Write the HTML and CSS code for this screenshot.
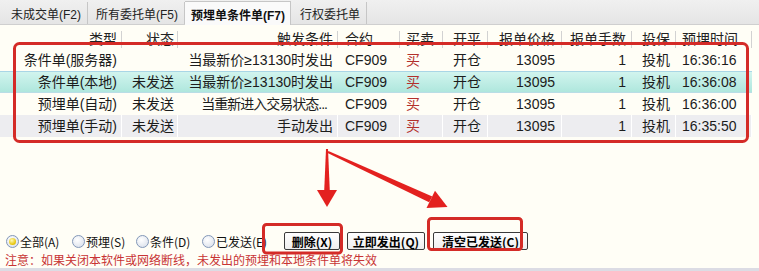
FILE: index.html
```html
<!DOCTYPE html>
<html lang="zh-CN">
<head>
<meta charset="utf-8">
<title>预埋单条件单</title>
<link rel="stylesheet" href="styles.css">
</head>
<body>
<div class="page">
  <div class="tabs">
    <div class="tab">未成交单(F2)</div>
    <div class="tab">所有委托单(F5)</div>
    <div class="tab active">预埋单条件单(F7)</div>
    <div class="tab last">行权委托单</div>
  </div>

  <div class="grid">
    <div class="row head">
      <div class="c c1">类型</div>
      <div class="c c2">状态</div>
      <div class="c c3">触发条件</div>
      <div class="c c4">合约</div>
      <div class="c c5">买卖</div>
      <div class="c c6">开平</div>
      <div class="c c7">报单价格</div>
      <div class="c c8">报单手数</div>
      <div class="c c9">投保</div>
      <div class="c c10">预埋时间</div>
    </div>
    <div class="row r">
      <div class="c c1">条件单(服务器)</div>
      <div class="c c2"></div>
      <div class="c c3">当最新价≥13130时发出</div>
      <div class="c c4">CF909</div>
      <div class="c c5 buy">买</div>
      <div class="c c6">开仓</div>
      <div class="c c7">13095</div>
      <div class="c c8">1</div>
      <div class="c c9">投机</div>
      <div class="c c10">16:36:16</div>
    </div>
    <div class="row r sel">
      <div class="c c1">条件单(本地)</div>
      <div class="c c2">未发送</div>
      <div class="c c3">当最新价≥13130时发出</div>
      <div class="c c4">CF909</div>
      <div class="c c5 buy">买</div>
      <div class="c c6">开仓</div>
      <div class="c c7">13095</div>
      <div class="c c8">1</div>
      <div class="c c9">投机</div>
      <div class="c c10">16:36:08</div>
    </div>
    <div class="row r">
      <div class="c c1">预埋单(自动)</div>
      <div class="c c2">未发送</div>
      <div class="c c3 trunc">当重新进入交易状态...</div>
      <div class="c c4">CF909</div>
      <div class="c c5 buy">买</div>
      <div class="c c6">开仓</div>
      <div class="c c7">13095</div>
      <div class="c c8">1</div>
      <div class="c c9">投机</div>
      <div class="c c10">16:36:00</div>
    </div>
    <div class="row r alt">
      <div class="c c1">预埋单(手动)</div>
      <div class="c c2">未发送</div>
      <div class="c c3">手动发出</div>
      <div class="c c4">CF909</div>
      <div class="c c5 buy">买</div>
      <div class="c c6">开仓</div>
      <div class="c c7">13095</div>
      <div class="c c8">1</div>
      <div class="c c9">投机</div>
      <div class="c c10">16:35:50</div>
    </div>
  </div>

  <div class="filler"></div>

  <div class="controls">
    <div class="opt w1"><span class="dot on"></span>全部(A)</div>
    <div class="opt w2"><span class="dot"></span>预埋(S)</div>
    <div class="opt w3"><span class="dot"></span>条件(D)</div>
    <div class="opt w4"><span class="dot"></span>已发送(E)</div>
    <div class="btn b1">删除(X)</div>
    <div class="btn b2">立即发出(Q)</div>
    <div class="btn b3">清空已发送(C)</div>
  </div>
  <div class="notice">注意：如果关闭本软件或网络断线，未发出的预埋和本地条件单将失效</div>
  <div class="bottombar"></div>

  <svg class="annot" width="759" height="271" viewBox="0 0 759 271">
    <rect x="14.5" y="43.5" width="733" height="98" rx="5" fill="none" stroke="#d42b27" stroke-width="3"/>
    <rect x="263.5" y="224.5" width="78" height="28.5" rx="3" fill="none" stroke="#d42b27" stroke-width="3"/>
    <rect x="428.5" y="218.5" width="93" height="31" rx="3" fill="none" stroke="#d42b27" stroke-width="3"/>
    <polygon points="326,149 328,149 329.8,191 324.2,191" fill="#e3211f"/>
    <polygon points="317,190 337,190 327,207" fill="#e3211f"/>
    <polygon points="327.6,152.9 328.4,151.1 432.3,196.5 429.1,202.3" fill="#e3211f"/>
    <polygon points="426.5,208 435,190.8 447.5,207" fill="#e3211f"/>
  </svg>
</div>
</body>
</html>
```

FILE: styles.css
```css
body {
  margin: 0;
  background: #fffef6;
  font-family: "Liberation Sans", "Noto Sans CJK SC", sans-serif;
  color: #1c1c1c;
}

.page {
  position: relative;
  width: 759px;
  height: 271px;
  display: flex;
  flex-direction: column;
  overflow: hidden;
}

/* Tabs */
.tabs {
  height: 25px;
  box-sizing: border-box;
  display: flex;
  align-items: flex-end;
  padding-left: 3px;
  background: linear-gradient(#f0f0f0, #e5e5e5);
  border-bottom: 1px solid #cfcfcf;
  font-size: 12px;
}
.tab {
  padding: 4px 6px 0 8px;
  line-height: 18px;
  height: 18px;
  border-right: 1px solid #c6c6c6;
  color: #222;
  white-space: nowrap;
}
.tab.active {
  padding: 5px 5px 0 6px;
  height: 18px;
  font-weight: bold;
  background: #fafafa;
  border-top: 1px solid #c6c6c6;
  margin-bottom: -1px;
  color: #111;
}
.tab.last {
  padding-left: 9px;
}

/* Grid */
.grid {
  display: flex;
  flex-direction: column;
}
.row {
  display: grid;
  grid-template-columns: 122px 56px 160px 62px 43px 45px 74px 70px 44px 76px;
  width: 752px;
  font-size: 14px;
}
.c {
  box-sizing: border-box;
  white-space: nowrap;
  overflow: hidden;
  border-right: 1px solid transparent;
}
.head {
  height: 24px;
  align-items: end;
  box-sizing: border-box;
  padding-bottom: 1px;
  color: #222;
}
.head .c {
  height: 17px;
  line-height: 17px;
  border-right-color: #d2d2d2;
}
.r {
  height: 22px;
  line-height: 22px;
}
.r.sel {
  background: linear-gradient(#d3f5ef, #ade6dc);
  box-shadow: inset 0 1px 0 #a9d6e6, inset 0 -1px 0 #b9dde6;
}
.r.alt {
  background: #ededf0;
}
.r.alt .c {
  border-right-color: #ffffff;
}

.c1 { text-align: right; padding-right: 4px; }
.c2 { text-align: right; padding-right: 3px; }
.c3 { text-align: right; padding-right: 4px; }
.c3.trunc { padding-right: 10px; letter-spacing: -1px; }
.c4 { padding-left: 7px; }
.c5 { padding-left: 6px; }
.c6 { padding-left: 10px; }
.c7 { text-align: right; padding-right: 6px; }
.c8 { text-align: right; padding-right: 5px; }
.c9 { padding-left: 10px; }
.c10 { padding-left: 6px; }

.buy { color: #b3302c; }

.filler { flex: 1; }

/* Controls */
.controls {
  height: 22px;
  display: flex;
  align-items: center;
  padding-left: 6px;
  font-size: 12px;
  font-family: "Noto Sans CJK SC", sans-serif;
  color: #111;
}
.opt {
  display: flex;
  align-items: center;
  white-space: nowrap;
}
.w1 { width: 66px; }
.w2 { width: 64px; }
.w3 { width: 66px; }
.w4 { width: 82px; }
.dot {
  width: 13px;
  height: 13px;
  box-sizing: border-box;
  border-radius: 50%;
  border: 1px solid #8297b8;
  background: radial-gradient(circle at 40% 35%, #ffffff, #d5dce8);
  margin-right: 1px;
  display: flex;
  align-items: center;
  justify-content: center;
}
.dot.on::before {
  content: "";
  width: 7px;
  height: 7px;
  border-radius: 50%;
  background: radial-gradient(circle at 40% 35%, #fffab8, #e6c200 70%, #c9a400);
}
.btn {
  height: 18px;
  box-sizing: border-box;
  border: 1px solid #3a3a3a;
  border-radius: 2px;
  background: linear-gradient(#ffffff, #eeeeee);
  font-weight: bold;
  font-size: 12px;
  display: flex;
  align-items: center;
  justify-content: center;
  white-space: nowrap;
  color: #000;
}
.b1 { width: 56px; }
.b2 { width: 78px; margin-left: 7px; }
.b3 { width: 95px; margin-left: 8px; }

.notice {
  height: 16px;
  line-height: 16px;
  padding-left: 5px;
  font-size: 12px;
  font-family: "Noto Sans CJK SC", sans-serif;
  color: #c83434;
  white-space: nowrap;
}

.bottombar {
  height: 3px;
  background: #dcdce4;
}

/* Annotation overlay */
.annot {
  position: absolute;
  left: 0;
  top: 0;
  pointer-events: none;
}
```
